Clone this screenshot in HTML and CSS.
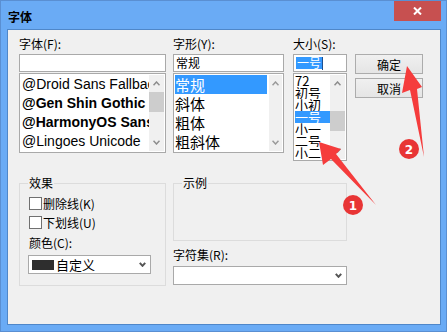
FILE: index.html
```html
<!DOCTYPE html>
<html lang="zh-CN">
<head>
	<meta charset="UTF-8">
	<title>字体</title>
	<link rel="stylesheet" href="styles.css">
</head>
<body>
	<div class="window">
		<div class="titlebar">
			<span class="title">字体</span>
			<span class="close">
				<svg width="9" height="8" viewBox="0 0 9 8"><path d="M1 0.5 L8 7.5 M8 0.5 L1 7.5" stroke="#fff" stroke-width="2"/></svg>
			</span>
		</div>
		<div class="client">
			<div class="top">
				<div class="col col-font">
					<div class="label">字体(F):</div>
					<div class="input"></div>
					<div class="list">
						<div class="items latin">
							<div class="item">@Droid Sans Fallback</div>
							<div class="item bold">@Gen Shin Gothic</div>
							<div class="item bold">@HarmonyOS Sans</div>
							<div class="item">@Lingoes Unicode</div>
						</div>
						<div class="scrollbar">
							<div class="sb-btn"><svg width="7" height="5" viewBox="0 0 7 5"><path d="M0.5 4.2 L3.5 1 L6.5 4.2" fill="none" stroke="#8c8c8c" stroke-width="1.5"/></svg></div>
							<div class="sb-track"><div class="sb-thumb"></div></div>
							<div class="sb-btn"><svg width="7" height="5" viewBox="0 0 7 5"><path d="M0.5 0.8 L3.5 4 L6.5 0.8" fill="none" stroke="#8c8c8c" stroke-width="1.5"/></svg></div>
						</div>
					</div>
				</div>

				<div class="col col-style">
					<div class="label">字形(Y):</div>
					<div class="input">常规</div>
					<div class="list">
						<div class="items cjk">
							<div class="item selected">常规</div>
							<div class="item">斜体</div>
							<div class="item">粗体</div>
							<div class="item">粗斜体</div>
						</div>
						<div class="scrollbar narrow">
							<div class="sb-btn"><svg width="7" height="5" viewBox="0 0 7 5"><path d="M0.5 4.2 L3.5 1 L6.5 4.2" fill="none" stroke="#9a9a9a" stroke-width="1.5"/></svg></div>
							<div class="sb-track"></div>
							<div class="sb-btn"><svg width="7" height="5" viewBox="0 0 7 5"><path d="M0.5 0.8 L3.5 4 L6.5 0.8" fill="none" stroke="#9a9a9a" stroke-width="1.5"/></svg></div>
						</div>
					</div>
				</div>

				<div class="col col-size">
					<div class="label">大小(S):</div>
					<div class="input"><span class="picked">一号</span><span class="caret"></span></div>
					<div class="list size-list">
						<div class="items sizes">
							<div class="item">72</div>
							<div class="item">初号</div>
							<div class="item">小初</div>
							<div class="item selected">一号</div>
							<div class="item">小一</div>
							<div class="item">二号</div>
							<div class="item">小二</div>
						</div>
						<div class="scrollbar">
							<div class="sb-btn"><svg width="7" height="5" viewBox="0 0 7 5"><path d="M0.5 4.2 L3.5 1 L6.5 4.2" fill="none" stroke="#8c8c8c" stroke-width="1.5"/></svg></div>
							<div class="sb-track"><div class="sb-thumb low"></div></div>
							<div class="sb-btn"><svg width="7" height="5" viewBox="0 0 7 5"><path d="M0.5 0.8 L3.5 4 L6.5 0.8" fill="none" stroke="#8c8c8c" stroke-width="1.5"/></svg></div>
						</div>
					</div>
				</div>

				<div class="col col-buttons">
					<div class="btn">确定</div>
					<div class="btn">取消</div>
				</div>
			</div>

			<div class="bottom">
				<fieldset class="effects">
					<legend>效果</legend>
					<div class="check-row"><span class="box"></span>删除线(K)</div>
					<div class="check-row"><span class="box"></span>下划线(U)</div>
					<div class="label color-label">颜色(C):</div>
					<div class="select color-select">
						<span class="swatch"></span>
						<span class="select-text">自定义</span>
						<svg class="chev" width="7" height="5" viewBox="0 0 7 5"><path d="M0.8 0.8 L3.5 3.8 L6.2 0.8" fill="none" stroke="#555" stroke-width="2"/></svg>
					</div>
				</fieldset>

				<div class="right">
					<fieldset class="sample">
						<legend>示例</legend>
					</fieldset>
					<div class="label charset-label">字符集(R):</div>
					<div class="select">
						<svg class="chev" width="7" height="5" viewBox="0 0 7 5"><path d="M0.8 0.8 L3.5 3.8 L6.2 0.8" fill="none" stroke="#555" stroke-width="2"/></svg>
					</div>
				</div>
			</div>
		</div>

		<svg class="marks" width="447" height="332" viewBox="0 0 447 332">
			<polygon points="319,142 341,149 336,154 376,205 331,159 323,165" fill="#f53c3c"/>
			<polygon points="407,66 422,87 417,89 424,157 410,90 402,93" fill="#f53c3c"/>
			<circle cx="353" cy="205" r="10" fill="#e83535"/>
			<text x="353" y="209.5" text-anchor="middle">1</text>
			<circle cx="409" cy="149" r="10" fill="#e83535"/>
			<text x="409" y="153.5" text-anchor="middle">2</text>
		</svg>
	</div>
</body>
</html>
```

FILE: styles.css
```css
html, body { margin: 0; padding: 0; background: #fff; }

.window {
	position: relative;
	width: 447px;
	height: 332px;
	box-sizing: border-box;
	border: 1px solid #5a8fd2;
	background: #6aabf5;
	padding: 0 5px 6px 6px;
	display: flex;
	flex-direction: column;
	font-family: "Noto Sans CJK SC", sans-serif;
	color: #000;
}

.titlebar { height: 28px; display: flex; justify-content: space-between; align-items: flex-start; }
.title { margin: 8px 0 0 1px; font-size: 12px; line-height: 16px; font-weight: bold; }
.close { width: 47px; height: 20px; background: #c75050; display: flex; justify-content: center; align-items: center; }

.client {
	flex: 1;
	background: #f0f0f0;
	border: 1px solid #4f87c9;
	padding: 7px 0 0 11px;
}

.top { display: flex; align-items: flex-start; }
.col-font { width: 147px; margin-right: 7px; }
.col-style { width: 111px; margin-right: 9px; }
.col-size { width: 54px; margin-right: 8px; }
.col-buttons { width: 68px; padding-top: 17px; }

.label { font-size: 12px; line-height: 14px; height: 14px; margin-bottom: 3px; white-space: nowrap; }

.input {
	height: 18px;
	box-sizing: border-box;
	border: 1px solid #a9a9a9;
	background: #fff;
	font-size: 12px;
	line-height: 16px;
	padding-left: 2px;
	display: flex;
	align-items: center;
}
.input .picked { background: #3399ff; color: #fff; line-height: 12px; height: 12px; padding: 0 1px; }
.input .caret { width: 1px; height: 13px; background: #1f4f8f; }

.list {
	margin-top: 1px;
	height: 80px;
	box-sizing: border-box;
	border: 1px solid #a9a9a9;
	background: #fff;
	padding: 1px;
	display: flex;
}
.size-list { height: 88px; }

.items { flex: 1; min-width: 0; overflow: hidden; }
.item { white-space: nowrap; overflow: hidden; }
.items.latin .item { font-family: "Liberation Sans", sans-serif; font-size: 14px; height: 19px; line-height: 19px; padding-left: 1px; }
.items.latin .item.bold { font-weight: bold; }
.items.cjk .item { font-size: 15px; height: 19px; line-height: 19px; margin-right: 2px; }
.items.sizes .item { font-size: 13px; height: 12px; line-height: 12px; }
.item.selected { background: #3399ff; color: #fff; }

.scrollbar { width: 15px; display: flex; flex-direction: column; background: #f0f0f0; }
.scrollbar.narrow { width: 13px; }
.sb-btn { height: 17px; display: flex; justify-content: center; align-items: center; }
.sb-track { flex: 1; }
.sb-thumb { height: 20px; background: #cdcdcd; }
.sb-thumb.low { margin-top: 19px; }

.btn {
	height: 20px;
	box-sizing: border-box;
	border: 1px solid #acacac;
	background: linear-gradient(#f0f0f0, #e5e5e5);
	font-size: 12px;
	display: flex;
	justify-content: center;
	align-items: center;
}
.btn + .btn { margin-top: 4px; }

.bottom { display: flex; align-items: flex-start; margin-top: 15px; }

fieldset {
	margin: 0;
	box-sizing: border-box;
	border: 1px solid #dcdcdc;
	min-inline-size: 0;
}
legend { padding: 0 1px; margin-left: -1px; font-size: 12px; line-height: 14px; }

.effects { width: 147px; margin-right: 7px; padding: 4px 10px 11px 9px; }
.check-row { height: 19px; display: flex; align-items: center; font-size: 12px; white-space: nowrap; }
.box { width: 13px; height: 13px; box-sizing: border-box; border: 1px solid #707070; background: #fff; margin-right: 1px; }
.color-label { margin: 4px 0 5px; }

.select {
	height: 19px;
	box-sizing: border-box;
	border: 1px solid #a9a9a9;
	background: #fff;
	display: flex;
	align-items: center;
	padding: 0 4px 0 3px;
}
.color-select { width: 123px; margin-left: -1px; }
.swatch { width: 22px; height: 10px; background: #2e2e2e; margin-right: 2px; }
.select-text { font-size: 13px; line-height: 16px; }
.chev { margin-left: auto; }

.right { width: 174px; display: flex; flex-direction: column; }
.sample { width: 174px; height: 65px; padding: 0 9px; }
.charset-label { margin: 7px 0 4px; }

.marks { position: absolute; top: -1px; left: -1px; pointer-events: none; }
.marks text { fill: #fff; font-family: "DejaVu Sans", sans-serif; font-size: 12px; font-weight: bold; }
```
